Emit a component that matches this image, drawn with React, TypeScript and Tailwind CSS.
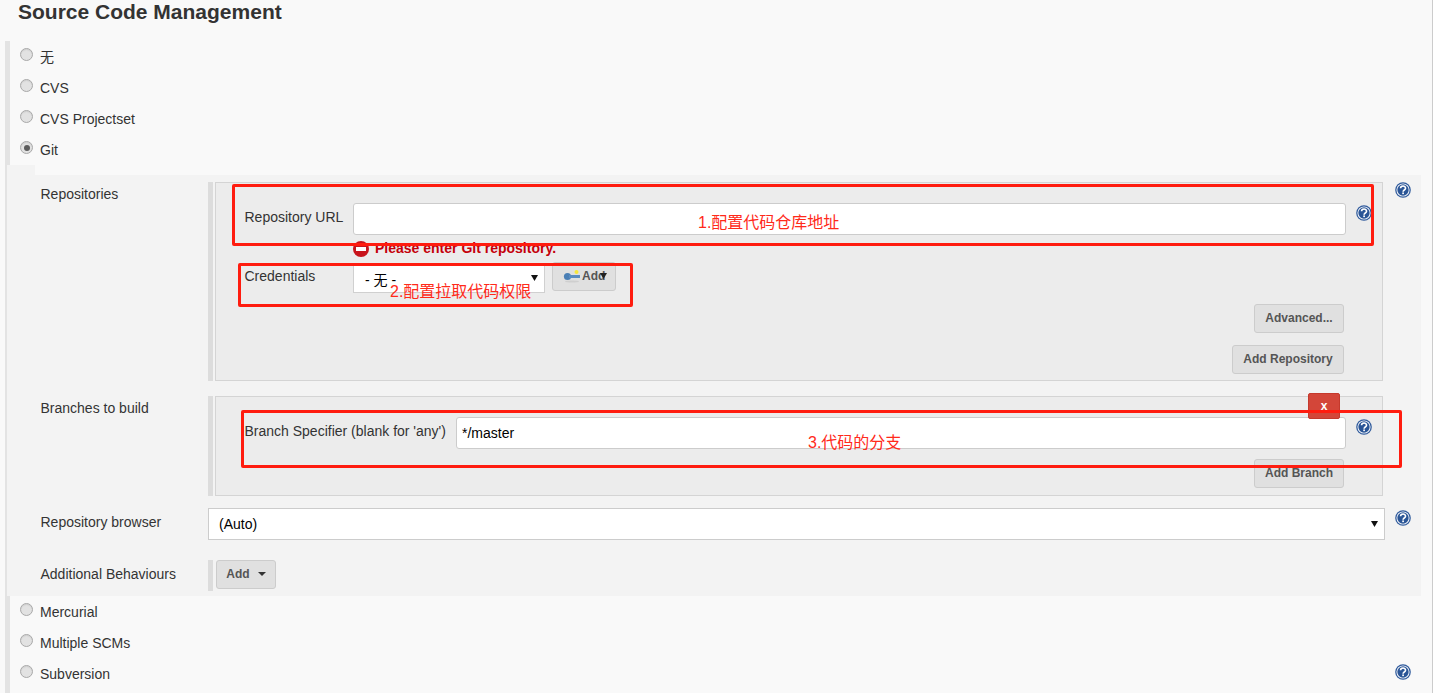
import React from "react";

const sans = "font-['Liberation_Sans','Noto_Sans_CJK_SC',sans-serif]";

function Help({ className = "" }: { className?: string }) {
  return (
    <svg width="16" height="16" viewBox="0 0 17 17" className={`shrink-0 ${className}`}>
      <circle cx="8.5" cy="8.5" r="8.3" fill="#2f5a9c" />
      <circle cx="8.5" cy="8.5" r="7" fill="#f4f6fa" />
      <circle cx="8.5" cy="8.5" r="6" fill="#2a5596" />
      <path d="M5.9 6.7c0-3.2 5.3-3.2 5.3-.1 0 1.9-2.6 1.9-2.6 3.7" fill="none" stroke="#fff" strokeWidth="1.7" />
      <rect x="7.7" y="11.1" width="1.8" height="1.8" fill="#fff" />
    </svg>
  );
}

function Radio({ checked = false }: { checked?: boolean }) {
  return (
    <span className="flex h-[13px] w-[13px] shrink-0 items-center justify-center rounded-full border border-[#a9a9a9] bg-[#e2e2e2] shadow-[inset_0_1px_1px_#cfcfcf]">
      {checked && <span className="h-[6px] w-[6px] rounded-full bg-[#5c5c5c]" />}
    </span>
  );
}

function RadioRow({ label, checked }: { label: string; checked?: boolean }) {
  return (
    <div className="flex h-[31px] items-center pl-[10px] text-[14px] text-[#333]">
      <span className="-mt-[4px] mr-[7px]">
        <Radio checked={checked} />
      </span>
      <span className="pt-[2px]">{label}</span>
    </div>
  );
}

function Btn({ children, className = "" }: { children: React.ReactNode; className?: string }) {
  return (
    <div
      className={`flex h-[29px] items-center justify-center rounded-[3px] border border-[#cccccc] bg-[#e0e0e0] pb-[1px] text-[12px] font-bold text-[#555] ${className}`}
    >
      {children}
    </div>
  );
}

function Arrow() {
  return (
    <svg width="7" height="6" viewBox="0 0 7 6" className="shrink-0">
      <path d="M0 0h7L3.5 6z" fill="#111" />
    </svg>
  );
}

function Annot({ className, children }: { className: string; children?: React.ReactNode }) {
  return <div className={`absolute ${className}`}>{children}</div>;
}

export default function App() {
  return (
    <div className={`flex h-[693px] w-[1444px] overflow-hidden bg-white ${sans}`}>
      <div className="relative h-[693px] w-[1433px] shrink-0 border-r border-[#cccccc] bg-[#f9f9f9]">
        <h1 className="h-[41px] pl-[18px] text-[21px] leading-[24px] font-bold text-[#333]">Source Code Management</h1>

        <div className="ml-[5px] flex h-[652px] w-[1416px] flex-col border-l-[5px] border-[#e3e3e3]">
          <RadioRow label="无" />
          <RadioRow label="CVS" />
          <RadioRow label="CVS Projectset" />
          <RadioRow label="Git" checked />

          <div className="-ml-[3px] h-[10px] w-[28px] shrink-0 bg-[#f3f3f3]" />
          <div className="-ml-[3px] flex h-[421px] w-[1414px] shrink-0 flex-col bg-[#f3f3f3] pt-[7px] text-[14px] text-[#333]">
            {/* Repositories */}
            <div className="flex h-[199px] shrink-0">
              <div className="w-[201px] shrink-0 pt-[2px] pl-[33.5px]">Repositories</div>
              <div className="flex h-full w-[1175px] shrink-0">
                <div className="w-[5px] shrink-0 bg-[#dcdcdc]" />
                <div className="ml-[2px] flex flex-1 flex-col border border-[#d4d4d4] bg-[#ececec]">
                  <div className="mt-[20px] flex h-[32px] items-start pl-[28.5px]">
                    <div className="w-[108.5px] shrink-0 pt-[4px]">Repository URL</div>
                    <div className="h-[32px] w-[993px] shrink-0 rounded-[3px] border border-[#cccccc] bg-white" />
                    <Help className="mt-[2px] ml-[10px]" />
                  </div>
                  <div className="mt-[6px] flex h-[16px] items-center pl-[137px]">
                    <svg width="16" height="16" viewBox="0 0 16 16" className="mr-[6px] shrink-0">
                      <circle cx="8" cy="8" r="8" fill="#c8141c" />
                      <rect x="3" y="6" width="10" height="4" fill="#fff" />
                    </svg>
                    <span className="-mt-[2px] text-[14px] font-bold text-[#c4000a]">Please enter Git repository.</span>
                  </div>
                  <div className="mt-[5px] flex h-[31px] items-start pl-[28.5px]">
                    <div className="w-[108.5px] shrink-0 pt-[4px]">Credentials</div>
                    <div className="mt-[2px] flex h-[29px] w-[192px] shrink-0 justify-between border border-[#d0d0d0] bg-white pt-[5px] pr-[6px] pl-[11px] text-black">
                      <span>- 无 -</span>
                      <span className="pt-[5px]">
                        <Arrow />
                      </span>
                    </div>
                    <Btn className="relative ml-[7px] w-[64px] justify-start! pl-[10px]">
                      <svg width="19" height="14" viewBox="0 0 19 14" className="shrink-0">
                        <ellipse cx="9" cy="12.5" rx="7" ry="1" fill="#cfcfcf" />
                        <circle cx="4.5" cy="7.5" r="3.6" fill="#4a7fb5" />
                        <rect x="6" y="6" width="11" height="3" fill="#5a8cc0" />
                        <circle cx="13.5" cy="3" r="2" fill="#f6e73c" />
                      </svg>
                      <span>Add</span>
                      <svg width="7" height="6" viewBox="0 0 7 6" className="absolute top-[10px] left-[47px]">
                        <path d="M0 0h7L3.5 6z" fill="#222" />
                      </svg>
                    </Btn>
                  </div>
                  <div className="mt-[11px] flex justify-end pr-[38px]">
                    <Btn className="w-[90px]">Advanced...</Btn>
                  </div>
                  <div className="mt-[12px] flex justify-end pr-[38px]">
                    <Btn className="w-[112px]">Add Repository</Btn>
                  </div>
                </div>
              </div>
              <Help className="mt-[0px] ml-[12px]" />
            </div>

            {/* Branches */}
            <div className="mt-[15px] flex h-[100px] shrink-0">
              <div className="w-[201px] shrink-0 pt-[2px] pl-[33.5px]">Branches to build</div>
              <div className="flex h-full w-[1175px] shrink-0">
                <div className="w-[5px] shrink-0 bg-[#dcdcdc]" />
                <div className="relative ml-[2px] flex flex-1 flex-col border border-[#d4d4d4] bg-[#ececec]">
                  <div className="absolute -top-[4px] left-[1092px] flex h-[26px] w-[32px] items-center justify-center rounded-[2px] border border-[#c5392c] bg-[#d34639] text-[12px] font-bold text-white">
                    x
                  </div>
                  <div className="mt-[20px] flex h-[32px] items-start pl-[28.5px]">
                    <div className="w-[211.5px] shrink-0 pt-[4px] whitespace-nowrap">Branch Specifier (blank for 'any')</div>
                    <div className="flex h-[32px] w-[890px] shrink-0 items-center rounded-[3px] border border-[#cccccc] bg-white pl-[5px] text-black">
                      */master
                    </div>
                    <Help className="mt-[2px] ml-[10px]" />
                  </div>
                  <div className="mt-[10px] flex justify-end pr-[38px]">
                    <Btn className="w-[90px]">Add Branch</Btn>
                  </div>
                </div>
              </div>
            </div>

            {/* Repository browser */}
            <div className="mt-[12px] flex h-[32px] shrink-0">
              <div className="w-[201px] shrink-0 pt-[4px] pl-[33.5px]">Repository browser</div>
              <div className="flex h-[32px] w-[1177px] shrink-0 items-center justify-between border border-[#cccccc] bg-white pr-[6px] pl-[10px] text-black">
                <span>(Auto)</span>
                <Arrow />
              </div>
              <Help className="mt-[2px] ml-[10px]" />
            </div>

            {/* Additional Behaviours */}
            <div className="mt-[20px] flex h-[31px] shrink-0">
              <div className="w-[201px] shrink-0 pt-[4px] pl-[33.5px]">Additional Behaviours</div>
              <div className="w-[5px] shrink-0 bg-[#dcdcdc]" />
              <Btn className="ml-[3px] w-[60px] gap-[8px]">
                <span>Add</span>
                <svg width="8" height="4" viewBox="0 0 8 4">
                  <path d="M0 0h8L4 4z" fill="#333" />
                </svg>
              </Btn>
            </div>
          </div>

          <RadioRow label="Mercurial" />
          <RadioRow label="Multiple SCMs" />
          <div className="relative">
            <RadioRow label="Subversion" />
            <Help className="absolute top-[6px] left-[1385px]" />
          </div>
        </div>

        {/* Red annotations drawn over the page */}
        <Annot className="top-[184px] left-[232px] h-[62px] w-[1142px] rounded-[2px] border-[3px] border-[#ff1c0f]" />
        <Annot className="top-[263px] left-[238px] h-[44px] w-[395px] rounded-[2px] border-[3px] border-[#ff1c0f]" />
        <Annot className="top-[410px] left-[241px] h-[58px] w-[1161px] rounded-[2px] border-[3px] border-[#ff1c0f]" />
        <Annot className="top-[212px] left-[698px] text-[16px] leading-[22px] whitespace-nowrap text-[#ff2a1a]">1.配置代码仓库地址</Annot>
        <Annot className="top-[281px] left-[390px] text-[16px] leading-[22px] whitespace-nowrap text-[#ff2a1a]">2.配置拉取代码权限</Annot>
        <Annot className="top-[432px] left-[808px] text-[16px] leading-[22px] whitespace-nowrap text-[#ff2a1a]">3.代码的分支</Annot>
      </div>
    </div>
  );
}
